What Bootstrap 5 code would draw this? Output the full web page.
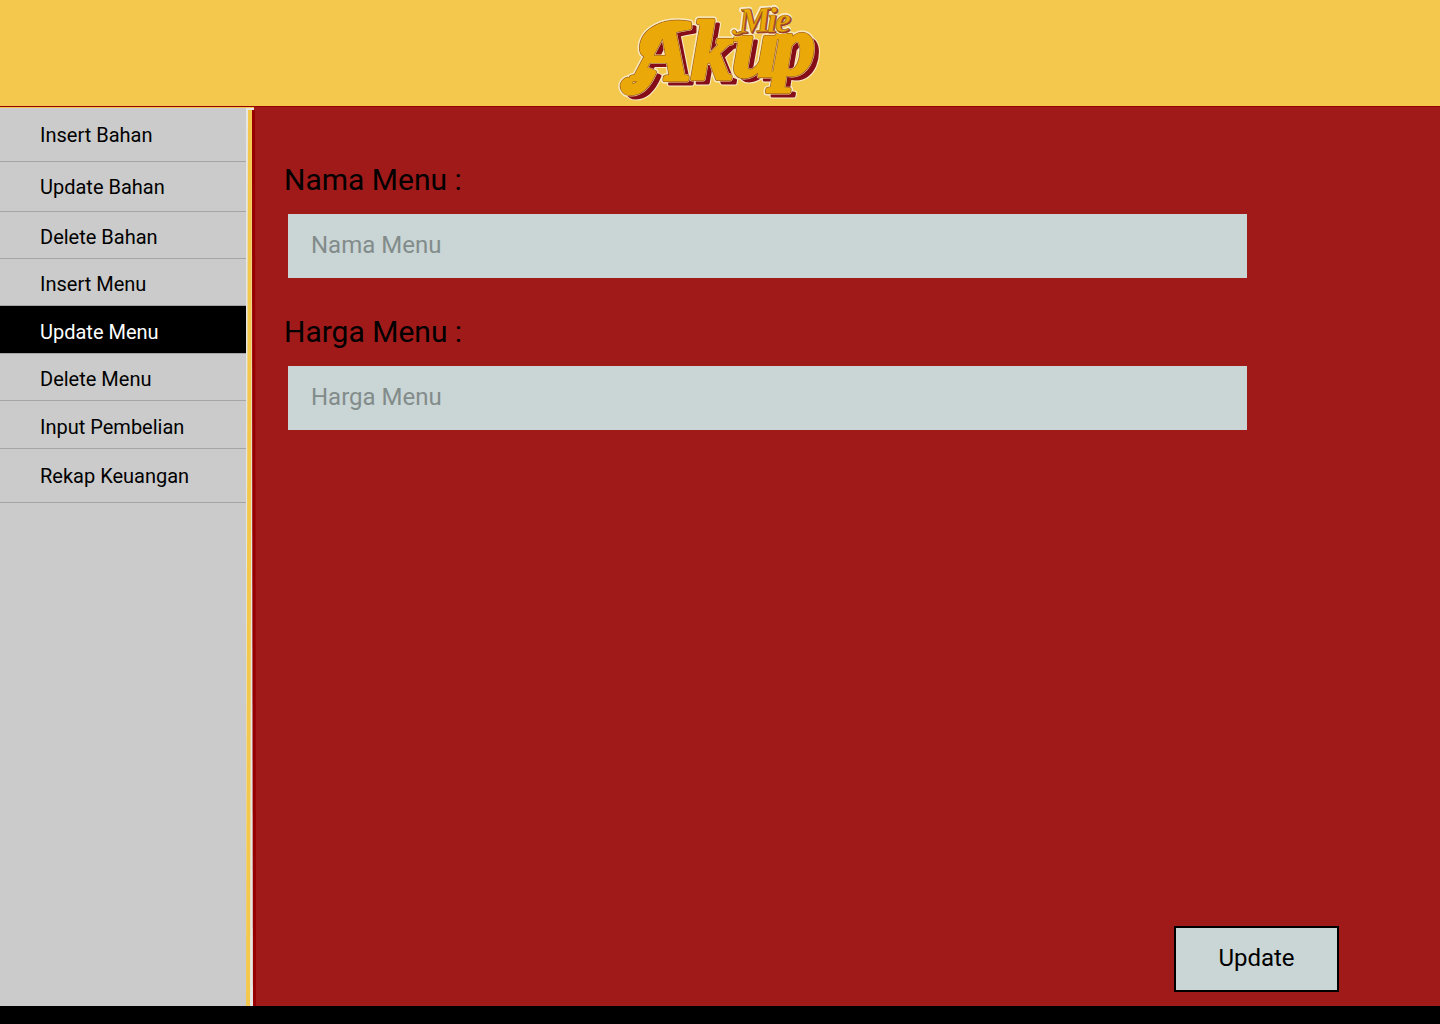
<!DOCTYPE html>
<html lang="id">
<head>
<meta charset="utf-8">
<meta name="viewport" content="width=device-width, initial-scale=1">
<title>Mie Akup - Update Menu</title>
<link href="https://cdn.jsdelivr.net/npm/bootstrap@5.3.0/dist/css/bootstrap.min.css" rel="stylesheet">
<style>
  body { font-family: Roboto, sans-serif; background: #a01a1a; color: #000; }
  .topbar { background: #f4c84d; height: 107px; border-bottom: 1px solid #960000; }
  .brand-logo { width: 208px; height: 106px; }
  .brand-logo text { font-family: "Liberation Serif", serif; font-weight: 700; font-style: italic; }
  .brand-big { font-size: 84px; }
  .brand-small { font-size: 36px; }
  .sidebar { width: 246px; background: #cbcbcb; border-top: 1px solid #f4c84d; }
  .side-link { height: 48px; padding: 4px 0 0 40px; font-size: 20px; line-height: 24px; color: #000; border-bottom: 1px solid #a5a5a5; }
  .side-link:hover { color: #000; background: #bdbdbd; }
  .side-link.active { color: #fff; background: #000; }
  .side-roomy { height: 54px; padding-top: 0; }
  .side-mid { height: 50px; padding-top: 0; }
  .side-snug { height: 47px; }
  .stripes { width: 10px; }
  .workspace { padding: 53px 101px 14px 28px; }
  .fields { padding-right: 92px; }
  .field-label { font-size: 30px; line-height: 40px; margin-bottom: 14px; }
  .field-box { height: 64px; margin-left: 4px; width: calc(100% - 4px); padding: 0 24px 2px 23px; font-size: 24px; color: #000; background: #cad5d5; border: 0; border-radius: 0; }
  .field-box:focus { background: #cad5d5; }
  .field-box::placeholder { color: #828c8b; }
  .field-gap { margin-bottom: 34px; }
  .btn-update { width: 165px; height: 66px; padding: 0 0 2px; font-size: 24px; color: #000; background: #cad5d5; border: 2px solid #000; border-radius: 0; }
  .bottombar { height: 18px; }
</style>
<script src="https://cdn.jsdelivr.net/npm/bootstrap@5.3.0/dist/js/bootstrap.bundle.min.js"></script>
</head>
<body class="d-flex flex-column min-vh-100">
<header class="topbar d-flex justify-content-center">
  <svg class="brand-logo" viewBox="616 0 208 106" role="img" aria-label="Mie Akup">
    <defs>
      <g id="word" class="brand-big">
        <path d="M655 72C650 84 643 94 631 94C622 94 619 85 625 80C629 77 633 81 630 85C638 87 643 77 647 69Z"/>
        <path d="M690 23C663 18 642 30 641 48C641 56 649 58 652 52C646 45 655 33 690 28Z"/>
        <text x="635" y="80">A</text>
        <text x="691" y="79">k</text>
        <text x="732" y="76">u</text>
        <text x="773" y="74">p</text>
      </g>
      <g id="top-word" class="brand-small">
        <path d="M744 31C739 37 731 35 732 31C734 28 737 31 736 33Z"/>
        <text x="739" y="33" transform="rotate(-3 739 34)">M</text>
        <text x="767" y="32">i</text>
        <text x="775" y="32">e</text>
      </g>
    </defs>
    <g stroke-linejoin="round">
      <use href="#word" x="5" y="4" fill="#f9eccb" stroke="#f9eccb" stroke-width="5"/>
      <use href="#word" fill="#f9eccb" stroke="#f9eccb" stroke-width="7"/>
      <use href="#word" x="5" y="4" fill="#850d18" stroke="#850d18" stroke-width="3"/>
      <use href="#word" fill="#f3d9a0" stroke="#f3d9a0" stroke-width="5"/>
      <use href="#word" fill="#8b4a22" stroke="#8b4a22" stroke-width="4"/>
      <use href="#word" fill="#eaa908" stroke="#eaa908" stroke-width="3"/>
      <use href="#top-word" fill="#f9eccb" stroke="#f9eccb" stroke-width="4"/>
      <use href="#top-word" x="1" y="1" fill="#9c3a22" stroke="#9c3a22" stroke-width="1"/>
      <use href="#top-word" fill="#eaa908" stroke="#9c5a22" stroke-width="0.6"/>
    </g>
  </svg>
</header>
<div class="d-flex flex-grow-1">
  <nav class="sidebar d-flex flex-column flex-shrink-0" aria-label="Menu utama">
    <a class="side-link side-roomy d-flex align-items-center text-decoration-none" href="#">Insert Bahan</a>
    <a class="side-link side-mid d-flex align-items-center text-decoration-none" href="#">Update Bahan</a>
    <a class="side-link side-snug d-flex align-items-center text-decoration-none" href="#">Delete Bahan</a>
    <a class="side-link side-snug d-flex align-items-center text-decoration-none" href="#">Insert Menu</a>
    <a class="side-link active d-flex align-items-center text-decoration-none" href="#" aria-current="page">Update Menu</a>
    <a class="side-link side-snug d-flex align-items-center text-decoration-none" href="#">Delete Menu</a>
    <a class="side-link d-flex align-items-center text-decoration-none" href="#">Input Pembelian</a>
    <a class="side-link side-roomy d-flex align-items-center text-decoration-none" href="#">Rekap Keuangan</a>
  </nav>
  <div class="stripes d-flex flex-shrink-0">
    <svg class="w-100 h-100" viewBox="0 0 10 899" preserveAspectRatio="none" aria-hidden="true">
      <path d="M0 0H8V3H6L7 899H0Z" fill="#e6e6e2"/>
      <path d="M0 0H8V1H0Z" fill="#f4c84d"/>
      <path d="M2 3H6L4 899H0Z" fill="#f4c84d"/>
      <path d="M6 3H9L10 899H7Z" fill="#960000"/>
    </svg>
  </div>
  <main class="workspace flex-grow-1">
    <form class="d-flex flex-column h-100" onsubmit="return false">
      <div class="fields">
        <div class="field-gap">
          <label class="field-label d-block" for="nama">Nama Menu :</label>
          <input class="field-box form-control" id="nama" type="text" placeholder="Nama Menu">
        </div>
        <div>
          <label class="field-label d-block" for="harga">Harga Menu :</label>
          <input class="field-box form-control" id="harga" type="text" placeholder="Harga Menu">
        </div>
      </div>
      <button class="btn btn-update align-self-end mt-auto" type="submit">Update</button>
    </form>
  </main>
</div>
<footer class="bottombar bg-black"></footer>
</body>
</html>
